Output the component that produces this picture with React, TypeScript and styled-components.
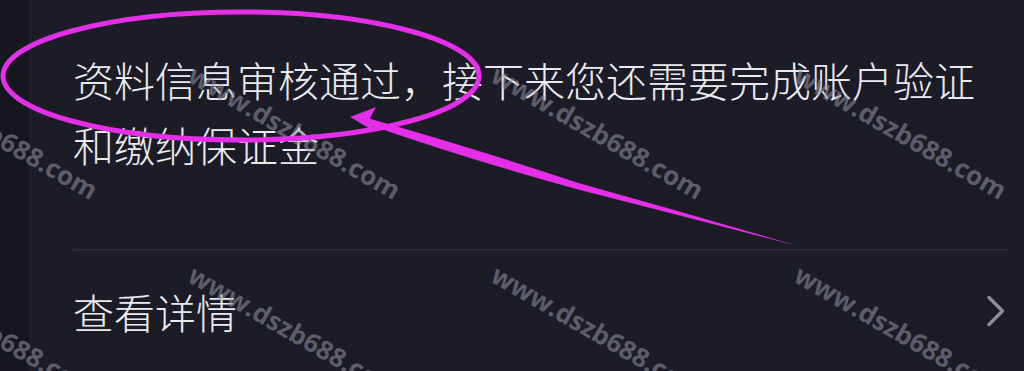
import React from 'react';
import styled, { createGlobalStyle } from 'styled-components';

const GlobalStyle = createGlobalStyle`
  html, body {
    margin: 0;
    padding: 0;
    background: #16161e;
  }
`;

// Layout
const Page = styled.div`
  position: relative;
  display: flex;
  width: 1024px;
  height: 371px;
  overflow: hidden;
  font-family: 'Noto Sans CJK SC', 'Noto Sans', sans-serif;
`;

const SideStrip = styled.div`
  width: 29px;
  flex-shrink: 0;
  background: #16161e;
`;

const Card = styled.div`
  flex: 1;
  display: flex;
  flex-direction: column;
  background: #1c1c27;
  padding: 47px 16px 0 44px;
`;

const Message = styled.p`
  margin: 0;
  font-size: 41px;
  font-weight: 300;
  line-height: 65px;
  color: #ebebef;
`;

const Divider = styled.div`
  height: 2px;
  margin-top: 72px;
  background: #2a2a36;
`;

const DetailRow = styled.div`
  display: flex;
  align-items: center;
  justify-content: space-between;
  height: 130px;
  padding-right: 2px;
`;

const Label = styled.span`
  font-size: 41px;
  font-weight: 300;
  color: #ebebef;
`;

// Watermarks
const WatermarkLayer = styled.div`
  position: absolute;
  inset: 0;
  pointer-events: none;
`;

const Mark = styled.span<{ $x: number; $y: number }>`
  position: absolute;
  left: ${(p) => p.$x}px;
  top: ${(p) => p.$y - 13}px;
  font-family: 'Open Sans', sans-serif;
  font-weight: 700;
  font-size: 26px;
  line-height: 26px;
  white-space: nowrap;
  color: rgba(150, 151, 162, 0.55);
  transform-origin: 0 50%;
  transform: rotate(30deg);
`;

const Annotation = styled.svg`
  position: absolute;
  left: 0;
  top: 0;
  pointer-events: none;
`;

const marks: { x: number; y: number }[] = [];
[72, 272].forEach((y) => {
  for (let i = 0; i < 4; i++) marks.push({ x: -112 + 303 * i, y });
});

const Chevron = () => (
  <svg width="20" height="32" viewBox="0 0 20 32">
    <path
      d="M3 2.5 L16.5 16 L3 29.5"
      fill="none"
      stroke="#8d8e97"
      strokeWidth="3.4"
      strokeLinecap="round"
      strokeLinejoin="round"
    />
  </svg>
);

export default function App() {
  return (
    <>
      <GlobalStyle />
      <Page>
        <SideStrip />
        <Card>
          <Message>资料信息审核通过，接下来您还需要完成账户验证和缴纳保证金</Message>
          <Divider />
          <DetailRow>
            <Label>查看详情</Label>
            <Chevron />
          </DetailRow>
        </Card>

        <WatermarkLayer>
          {marks.map((m, i) => (
            <Mark key={i} $x={m.x} $y={m.y}>
              www.dszb688.com
            </Mark>
          ))}
        </WatermarkLayer>

        {/* hand-drawn highlight */}
        <Annotation width="1024" height="371" viewBox="0 0 1024 371">
          <ellipse cx="241" cy="76" rx="238" ry="64" fill="none" stroke="#e52ee8" strokeWidth="5" />
          <path d="M369 118.5 Q 470 147 580 183.5 Q 690 214 798 246 Q 690 218 580 190 Q 470 160 371 125.5 Z" fill="#e52ee8" />
          <path d="M350 117 L376 107 L370 118 L374 131 Z" fill="#e52ee8" />
        </Annotation>
      </Page>
    </>
  );
}
